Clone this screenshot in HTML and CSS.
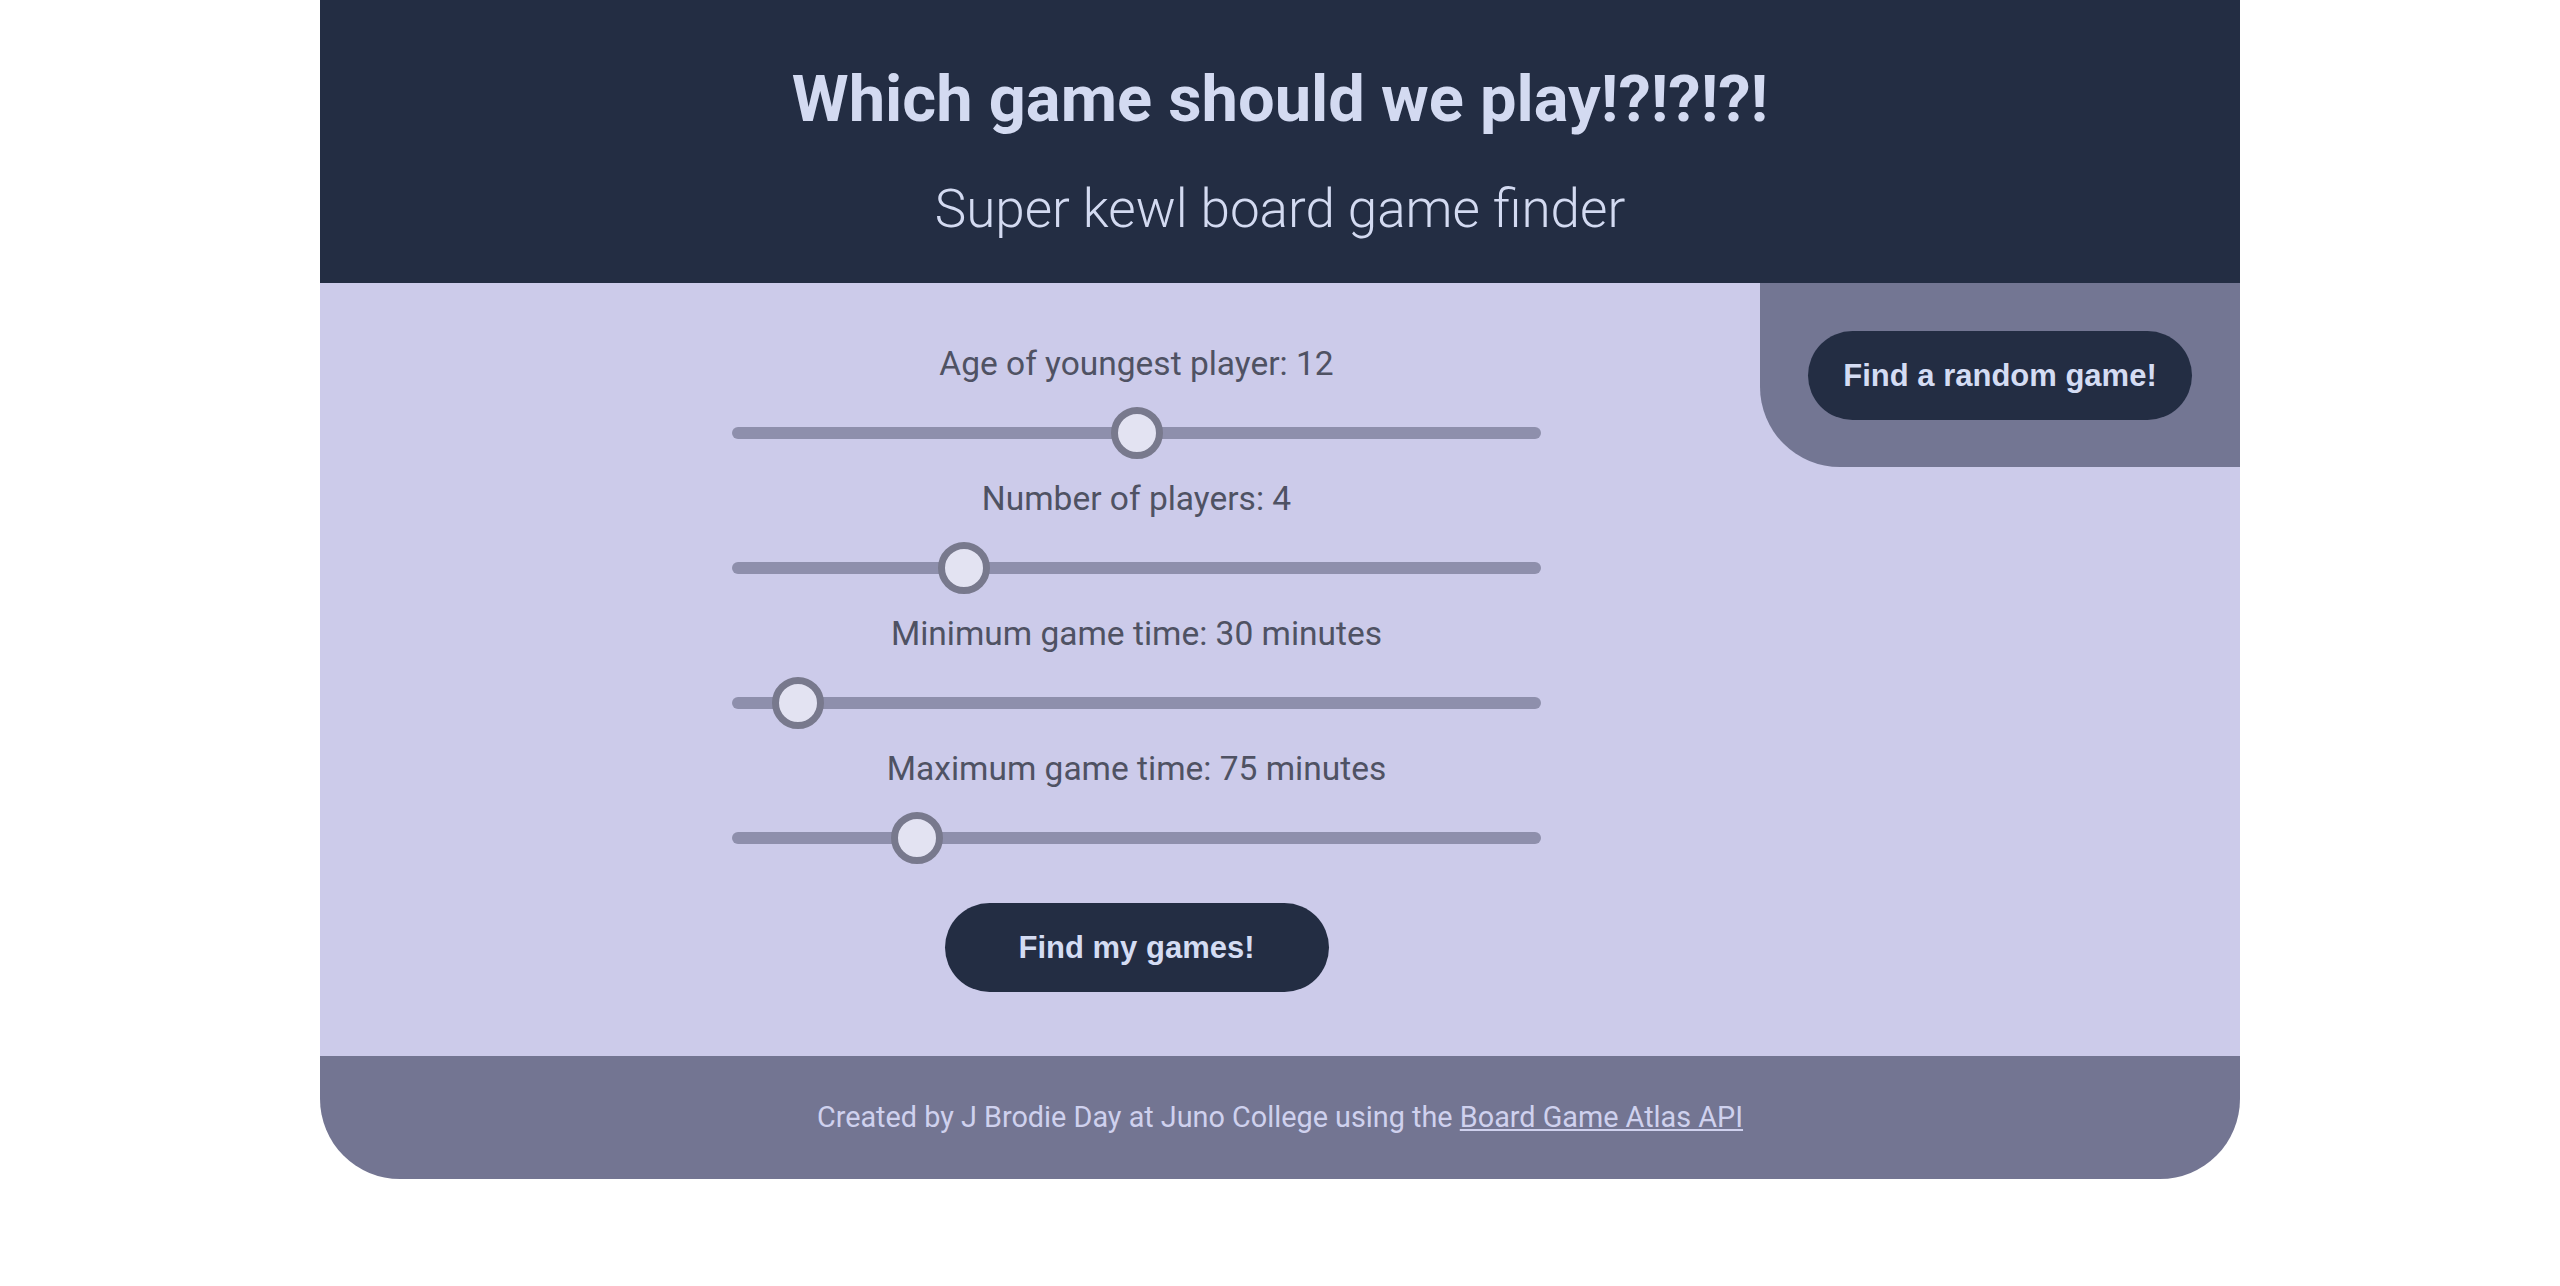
FILE: index.html
```html
<!DOCTYPE html>
<html lang="en">
<head>
<meta charset="utf-8">
<title>Which game should we play!?!?!?!</title>
<link rel="stylesheet" href="styles.css">
</head>
<body>
<div class="page">
  <header class="site-header">
    <h1 class="title">Which game should we play!?!?!?!</h1>
    <p class="subtitle">Super kewl board game finder</p>
  </header>
  <main class="main">
    <form class="finder">
      <label class="field-label" for="age">Age of youngest player: 12</label>
      <input class="slider" type="range" id="age" min="4" max="20" value="12">
      <label class="field-label" for="players">Number of players: 4</label>
      <input class="slider" type="range" id="players" min="1" max="12" value="4">
      <label class="field-label" for="mintime">Minimum game time: 30 minutes</label>
      <input class="slider" type="range" id="mintime" min="15" max="300" step="15" value="30">
      <label class="field-label" for="maxtime">Maximum game time: 75 minutes</label>
      <input class="slider" type="range" id="maxtime" min="15" max="300" step="15" value="75">
      <button class="btn btn-find" type="button">Find my games!</button>
    </form>
    <aside class="random-panel">
      <button class="btn" type="button">Find a random game!</button>
    </aside>
  </main>
  <footer class="site-footer">
    <p class="credit">Created by J Brodie Day at Juno College using the <a href="#">Board Game Atlas API</a></p>
  </footer>
</div>
</body>
</html>
```
FILE: styles.css
```css
html, body {
  margin: 0;
  padding: 0;
  background: #ffffff;
}

body {
  font-family: Roboto, "Noto Sans", sans-serif;
}

.page {
  width: 1920px;
  margin: 0 auto;
}

.site-header {
  background: #232d43;
  color: #d3daf1;
  text-align: center;
  padding: 61px 0 43px;
}

.title {
  margin: 0;
  font-size: 65px;
  font-weight: 700;
  line-height: 76px;
}

.subtitle {
  margin: 41px 0 0;
  font-size: 53px;
  font-weight: 300;
  line-height: 62px;
}

.main {
  background: #cccbea;
  display: flex;
  align-items: flex-start;
  justify-content: space-between;
}

.finder {
  width: 809px;
  margin-left: 412px;
  padding: 61px 0 64px;
  display: flex;
  flex-direction: column;
  align-items: center;
}

.field-label {
  font-size: 33.5px;
  line-height: 39px;
  color: #4f5263;
}

.slider {
  -webkit-appearance: none;
  appearance: none;
  display: block;
  width: 809px;
  height: 52px;
  margin: 24px 0 20px;
  background: transparent;
}

.slider::-webkit-slider-runnable-track {
  height: 12px;
  background: #8e8fac;
  border-radius: 6px;
}

.slider::-webkit-slider-thumb {
  -webkit-appearance: none;
  appearance: none;
  box-sizing: border-box;
  width: 52px;
  height: 52px;
  margin-top: -20px;
  border-radius: 50%;
  background: #e3e3f2;
  border: 7px solid #78798d;
}

.btn {
  width: 384px;
  height: 89px;
  border: none;
  border-radius: 45px;
  background: #232d43;
  color: #d4dcf3;
  font-family: "Liberation Sans", Arial, sans-serif;
  font-weight: 700;
  font-size: 31px;
  cursor: pointer;
}

.btn-find {
  margin-top: 19px;
}

.random-panel {
  background: #737693;
  width: 480px;
  box-sizing: border-box;
  padding: 48px 48px 47px;
  border-bottom-left-radius: 80px;
}

.site-footer {
  background: #737592;
  border-bottom-left-radius: 80px;
  border-bottom-right-radius: 80px;
  text-align: center;
  padding: 44px 0 45px;
}

.credit {
  margin: 0;
  font-size: 28.8px;
  line-height: 34px;
  color: #cfd1ee;
}

.credit a {
  color: #cfd1ee;
}
```
